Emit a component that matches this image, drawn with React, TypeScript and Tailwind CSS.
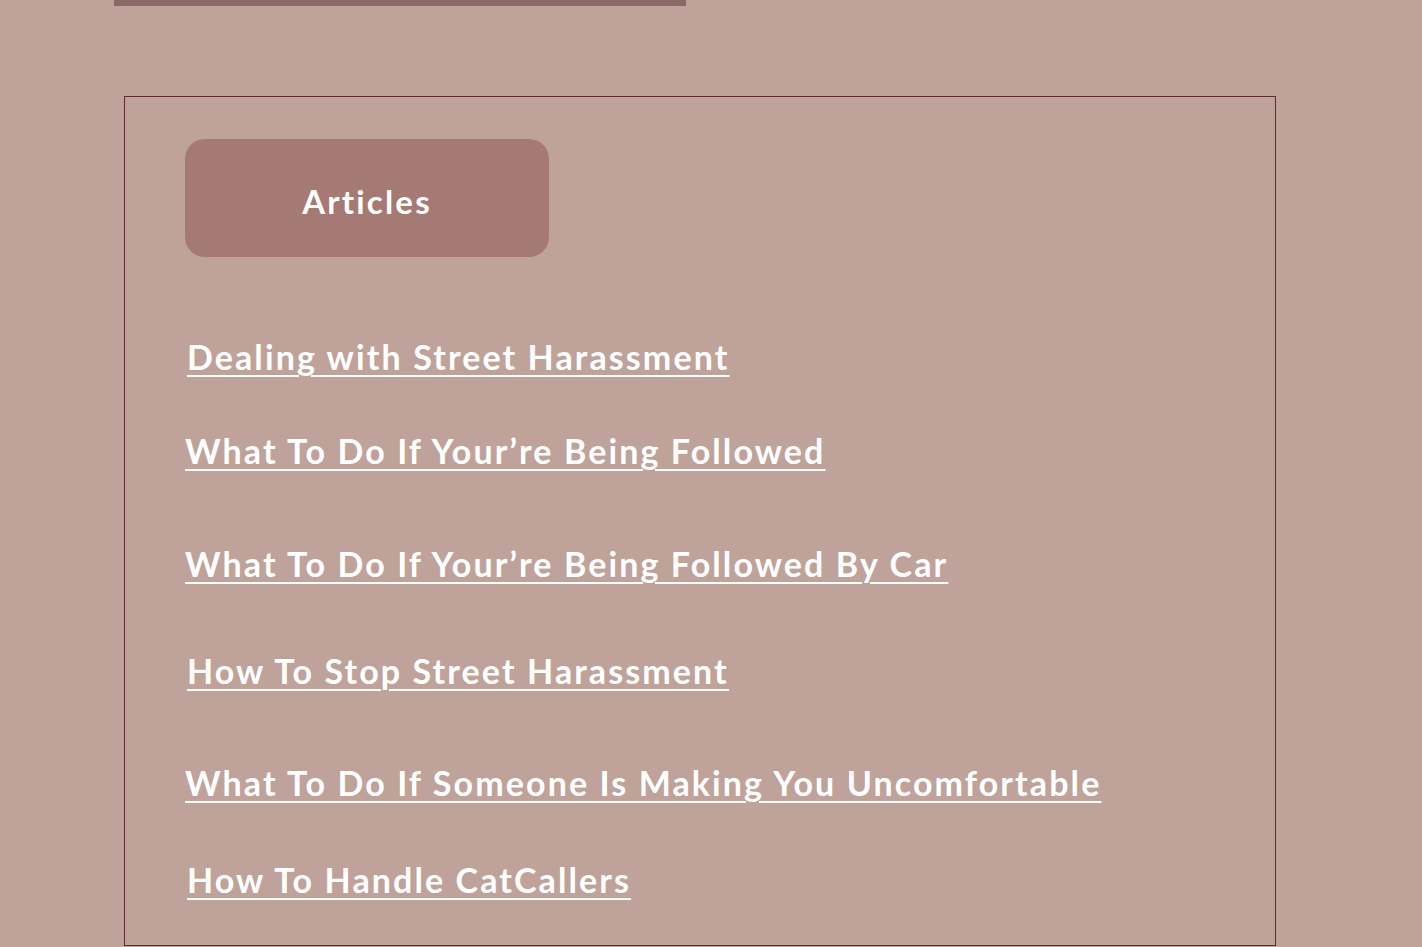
const links = [
  { title: 'Dealing with Street Harassment', cls: 'mt-[80px] ml-[2px]' },
  { title: 'What To Do If Your’re Being Followed', cls: 'mt-[54px]' },
  { title: 'What To Do If Your’re Being Followed By Car', cls: 'mt-[73px]' },
  { title: 'How To Stop Street Harassment', cls: 'mt-[67px] ml-[2px]' },
  { title: 'What To Do If Someone Is Making You Uncomfortable', cls: 'mt-[72px]' },
  { title: 'How To Handle CatCallers', cls: 'mt-[57px] ml-[2px]' },
]

export default function App() {
  return (
    <div className="min-h-[947px] bg-[#bfa39b] font-['Lato','Open_Sans',sans-serif] overflow-hidden">
      {/* top strip */}
      <div className="ml-[114px] h-[6px] w-[572px] bg-[#8b6966]" />

      <section className="ml-[124px] mt-[90px] flex h-[850px] w-[1152px] flex-col border border-[#5a2c2c] pl-[60px] pt-[42px]">
        <div className="flex h-[118px] w-[364px] items-center justify-center rounded-[20px] bg-[#a67a74] pt-[8px]">
          <span className="text-[33px] font-bold tracking-[2.2px] text-white">Articles</span>
        </div>

        {links.map((l) => (
          <a
            key={l.title}
            href="#"
            className={`${l.cls} block h-[40px] self-start text-[34px] font-bold leading-[40px] tracking-[2.1px] text-white underline decoration-2 underline-offset-[5px]`}
          >
            {l.title}
          </a>
        ))}
      </section>
    </div>
  )
}
